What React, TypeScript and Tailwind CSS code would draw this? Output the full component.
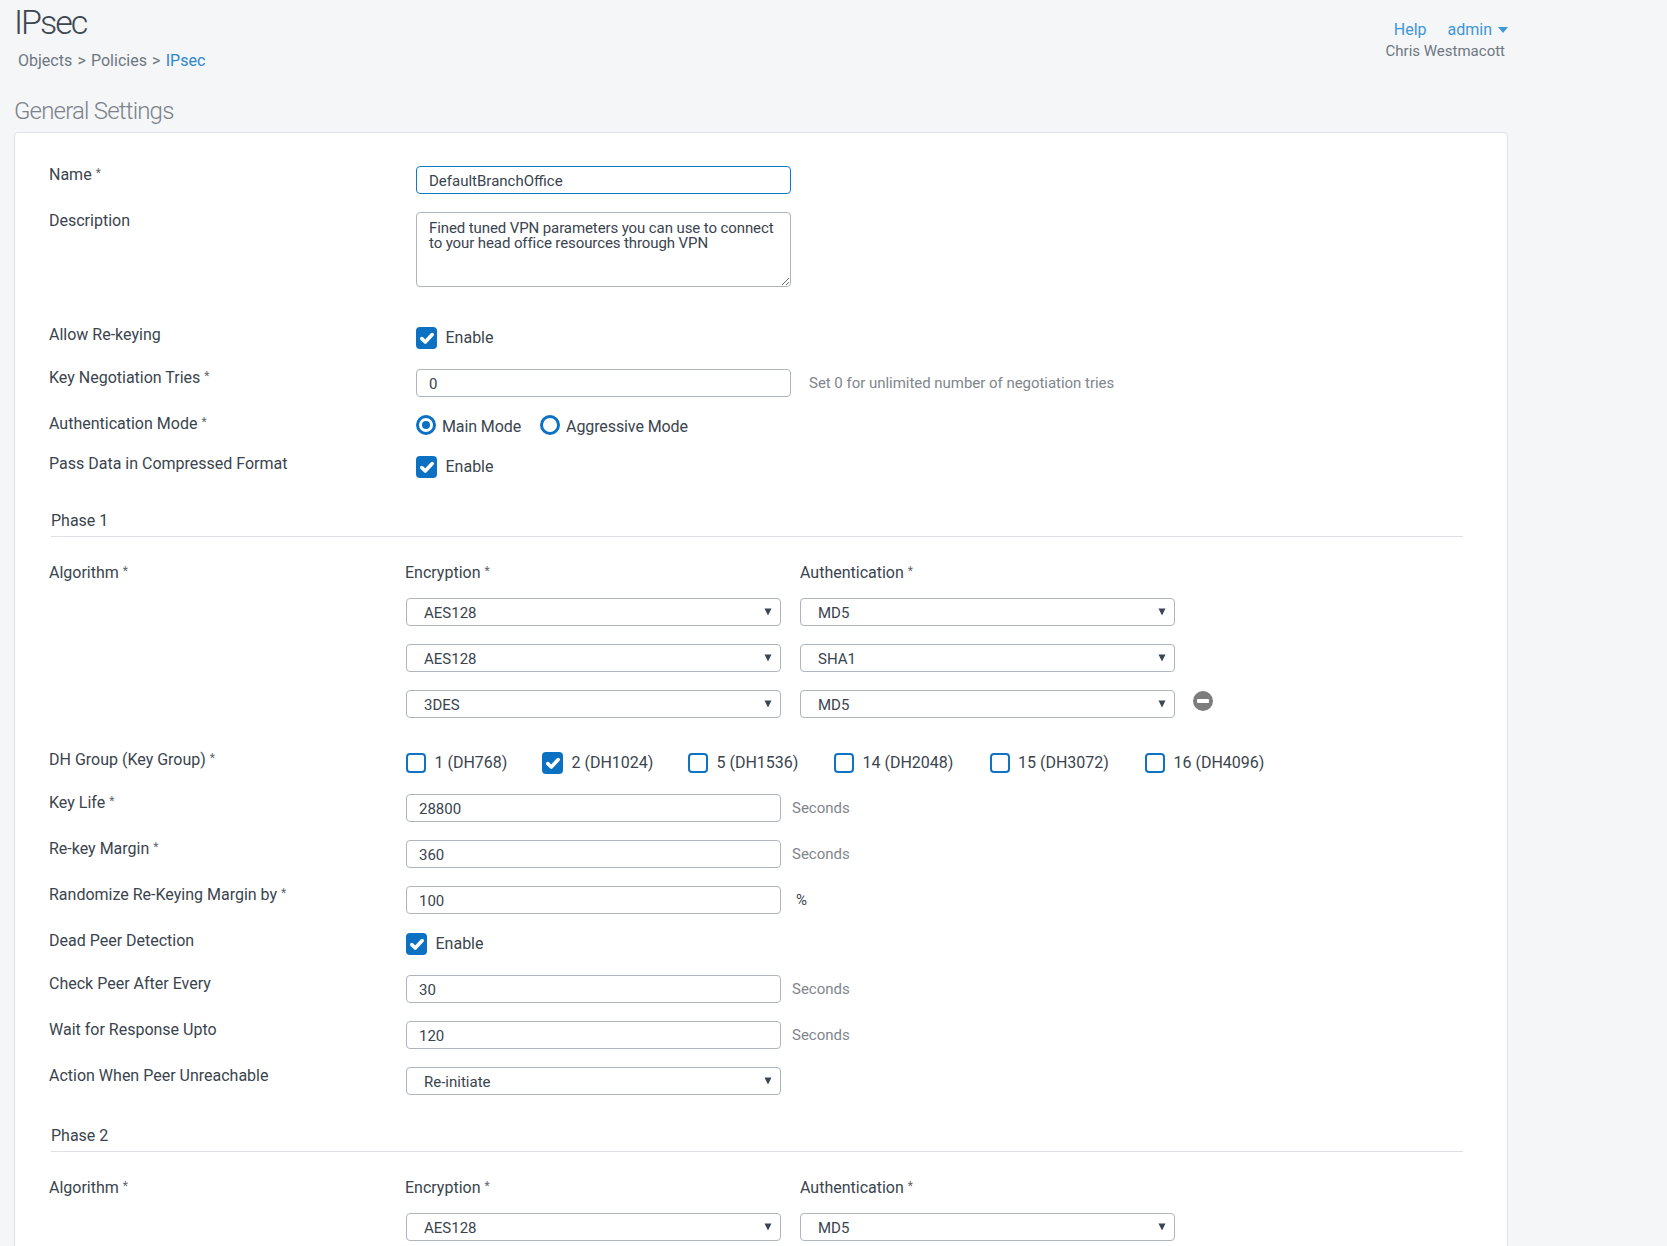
import type { ReactNode } from 'react';

const font = "font-['Roboto',sans-serif]";

function Star() {
  return <span className="ml-1 align-[3px] text-[12px] text-[#5f6870]">*</span>;
}

function Field({ label, required, className, labelClass = '', children }: { label: string; required?: boolean; className: string; labelClass?: string; children?: ReactNode }) {
  return (
    <div className={`flex items-start ${className}`}>
      <div className={`w-[357px] shrink-0 text-[16px] leading-5 text-[#3a444e] ${labelClass}`}>
        {label}
        {required && <Star />}
      </div>
      {children}
    </div>
  );
}

function Check({ on, label, className = '' }: { on?: boolean; label: string; className?: string }) {
  return (
    <label className={`flex items-center ${className}`}>
      {on ? (
        <span className="flex h-[22px] w-[21px] items-center justify-center rounded-[4px] bg-[#0c70c3]">
          <svg viewBox="0 0 16 16" className="h-[16px] w-[16px]" fill="none" stroke="#fff" strokeWidth="3.6" strokeLinecap="round" strokeLinejoin="round">
            <path d="M2.8 8.6 6.3 12 13.2 4.6" />
          </svg>
        </span>
      ) : (
        <span className="h-[20px] w-[20px] rounded-[4px] border-2 border-[#0f72c2] bg-white" />
      )}
      <span className="ml-[8.5px] text-[16px] leading-5 text-[#3a444e]">{label}</span>
    </label>
  );
}

function Radio({ on, label }: { on?: boolean; label: string }) {
  return (
    <label className="flex items-start">
      <span className="flex h-[20px] w-[20px] items-center justify-center rounded-full border-[3px] border-[#0c70c3] bg-white">
        {on && <span className="h-[8px] w-[8px] rounded-full bg-[#0c70c3]" />}
      </span>
      <span className="mt-[2px] ml-[6px] text-[16px] leading-5 tracking-[-0.1px] text-[#3a444e]">{label}</span>
    </label>
  );
}

function TextBox({ value, focus }: { value: string; focus?: boolean }) {
  return (
    <input
      readOnly
      value={value}
      className={`h-[28px] w-[375px] rounded-[4px] border bg-white px-[12px] pt-[1px] text-[15px] text-[#3a444e] outline-none ${focus ? 'border-[#0f7ac4]' : 'border-[#aeb5bd]'}`}
    />
  );
}

function Dropdown({ value }: { value: string }) {
  return (
    <div className="relative h-[28px] w-[375px]">
      <select
        value={value}
        onChange={() => {}}
        className="h-full w-full appearance-none rounded-[4px] border border-[#aeb5bd] bg-white pt-[2px] pl-[17px] text-[15px] text-[#3a444e] outline-none"
      >
        <option>{value}</option>
      </select>
      <svg viewBox="0 0 8 8" className="pointer-events-none absolute top-[10px] right-[9px] h-[8px] w-[8px]" fill="#3a4652">
        <path d="M0.5 0.5h7L4 7.5z" />
      </svg>
    </div>
  );
}

function PhaseTitle({ title }: { title: string }) {
  return (
    <div className="ml-[2px] h-[27px] border-b border-[#dcdfe3] pt-[1px] text-[16px] leading-5 text-[#3a444e]">{title}</div>
  );
}

function NumberRow({ label, required, value, unit, className, labelClass }: { label: string; required?: boolean; value: string; unit: string; className: string; labelClass?: string }) {
  return (
    <Field label={label} required={required} className={className} labelClass={labelClass}>
      <div className="mt-[2px] flex h-[28px] items-center">
        <TextBox value={value} />
        <span className={`text-[15px] ${unit === '%' ? 'ml-[15px] text-[#3a444e]' : 'ml-[11px] text-[#80868c]'}`}>{unit}</span>
      </div>
    </Field>
  );
}

function AlgoHead() {
  return (
    <>
      <div className="-ml-px text-[16px] leading-5 text-[#3a444e]">Encryption<Star /></div>
      <div className="text-[16px] leading-5 text-[#3a444e]">Authentication<Star /></div>
    </>
  );
}

const dhGroups = [
  { label: '1 (DH768)', on: false, cls: 'w-[136px]' },
  { label: '2 (DH1024)', on: true, cls: 'w-[146px]' },
  { label: '5 (DH1536)', on: false, cls: 'w-[146px]' },
  { label: '14 (DH2048)', on: false, cls: 'w-[155.5px]' },
  { label: '15 (DH3072)', on: false, cls: 'w-[155.5px]' },
  { label: '16 (DH4096)', on: false, cls: '' },
];

export default function App() {
  return (
    <div className={`h-[1246px] overflow-hidden bg-[#f4f6f8] ${font}`}>
      <div className="w-[1508px]">
        <header className="flex h-[132px] justify-between pl-[14px]">
          <div>
            <h1 className="h-[44px] text-[34px] leading-[44px] font-light tracking-[-2px] text-[#3c4650]">IPsec</h1>
            <nav className="mt-[7px] ml-[4px] text-[16px] leading-5 text-[#6f7680] [word-spacing:1.25px]">
              Objects &gt; Policies &gt; <span className="text-[#2d87c9]">IPsec</span>
            </nav>
            <h2 className="mt-[25px] text-[24px] leading-[30px] font-light tracking-[-0.8px] text-[#7b828a]">General Settings</h2>
          </div>
          <div className="mt-[20px] flex flex-col items-end text-[16px] leading-5">
            <div className="flex items-center text-[#3f97d6]">
              <span>Help</span>
              <span className="ml-[21px]">admin</span>
              <svg viewBox="0 0 10 6" className="ml-[6px] h-[6px] w-[10px]" fill="#3f97d6">
                <path d="M0 0h10L5 6z" />
              </svg>
            </div>
            <div className="mt-[1px] mr-[3px] text-[15px] text-[#6f7680]">Chris Westmacott</div>
          </div>
        </header>

        <main className="ml-[14px] rounded-t-[4px] border border-[#dde0e4] bg-white pt-[31px] pr-[44px] pl-[34px]">
          <Field label="Name" required className="h-[46px]" labelClass="-mt-px">
            <div className="mt-[2px] ml-[10px]">
              <TextBox value="DefaultBranchOffice" focus />
            </div>
          </Field>
          <Field label="Description" className="h-[114px]" labelClass="mt-px">
            <textarea
              readOnly
              value={'Fined tuned VPN parameters you can use to connect to your head office resources through VPN'}
              className="mt-[2px] ml-[10px] h-[75px] w-[375px] rounded-[4px] border border-[#aeb5bd] bg-white py-[8px] pr-[6px] pl-[12px] text-[15px] leading-[15px] tracking-[-0.1px] text-[#3a444e] outline-none"
            />
          </Field>
          <Field label="Allow Re-keying" className="h-[43px]" labelClass="mt-px">
            <div className="mt-[3px] ml-[10px]"><Check on label="Enable" /></div>
          </Field>
          <Field label="Key Negotiation Tries" required className="h-[46px]" labelClass="-mt-px">
            <div className="mt-[2px] ml-[10px] flex h-[28px] items-center">
              <TextBox value="0" />
              <span className="ml-[18px] text-[15px] tracking-[-0.03px] text-[#80868c]">Set 0 for unlimited number of negotiation tries</span>
            </div>
          </Field>
          <Field label="Authentication Mode" required className="h-[40px]" labelClass="-mt-px">
            <div className="mt-[2px] ml-[10px] flex gap-[19px]">
              <Radio on label="Main Mode" />
              <Radio label="Aggressive Mode" />
            </div>
          </Field>
          <Field label="Pass Data in Compressed Format" className="h-[57px]" labelClass="mt-px">
            <div className="mt-[3px] ml-[10px]"><Check on label="Enable" /></div>
          </Field>

          <PhaseTitle title="Phase 1" />

          <Field label="Algorithm" required className="mt-[24px] h-[188px]">
            <div className="grid grid-cols-[375px_375px_auto] content-start gap-x-[19px]">
              <AlgoHead />
              <div />
              <div className="mt-[15px]"><Dropdown value="AES128" /></div>
              <div className="mt-[15px]"><Dropdown value="MD5" /></div>
              <div />
              <div className="mt-[18px]"><Dropdown value="AES128" /></div>
              <div className="mt-[18px]"><Dropdown value="SHA1" /></div>
              <div />
              <div className="mt-[18px]"><Dropdown value="3DES" /></div>
              <div className="mt-[18px]"><Dropdown value="MD5" /></div>
              <div className="mt-[19px] -ml-px flex h-[20px] w-[20px] items-center justify-center rounded-full bg-[#7d7d7d]">
                <span className="h-[4px] w-[12px] rounded-[1px] bg-white" />
              </div>
            </div>
          </Field>

          <Field label="DH Group (Key Group)" required className="h-[43px]" labelClass="-mt-px">
            <div className="mt-[2px] flex h-[24px] items-center">
              {dhGroups.map((g) => (
                <Check key={g.label} on={g.on} label={g.label} className={g.cls} />
              ))}
            </div>
          </Field>
          <NumberRow label="Key Life" required value="28800" unit="Seconds" className="h-[46px]" labelClass="-mt-px" />
          <NumberRow label="Re-key Margin" required value="360" unit="Seconds" className="h-[46px]" labelClass="-mt-px" />
          <NumberRow label="Randomize Re-Keying Margin by" required value="100" unit="%" className="h-[46px]" labelClass="-mt-px" />
          <Field label="Dead Peer Detection" className="h-[43px]" labelClass="mt-px">
            <div className="mt-[3px]"><Check on label="Enable" /></div>
          </Field>
          <NumberRow label="Check Peer After Every" value="30" unit="Seconds" className="h-[46px]" labelClass="mt-px" />
          <NumberRow label="Wait for Response Upto" value="120" unit="Seconds" className="h-[46px]" labelClass="mt-px" />
          <Field label="Action When Peer Unreachable" className="h-[60px]" labelClass="mt-px">
            <div className="mt-[2px]"><Dropdown value="Re-initiate" /></div>
          </Field>

          <PhaseTitle title="Phase 2" />

          <Field label="Algorithm" required className="mt-[24px] h-[188px]">
            <div className="grid grid-cols-[375px_375px] content-start gap-x-[19px]">
              <AlgoHead />
              <div className="mt-[15px]"><Dropdown value="AES128" /></div>
              <div className="mt-[15px]"><Dropdown value="MD5" /></div>
            </div>
          </Field>
        </main>
      </div>
    </div>
  );
}
